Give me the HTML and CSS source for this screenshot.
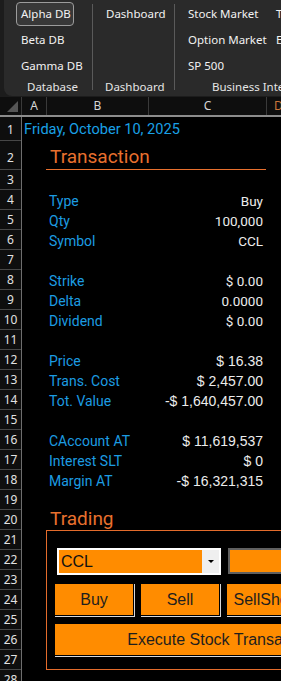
FILE: index.html
```html
<!DOCTYPE html>
<html lang="en">
  <head>
    <meta charset="UTF-8" />
    <meta name="viewport" content="width=device-width, initial-scale=1.0" />
    <title>Trading Sheet</title>
    <link rel="stylesheet" href="styles.css">
  </head>
  <body>
    <div class="ribbon-wrap">
      <div class="ribbon">
        <div class="group group-db">
          <div class="items">
            <div class="item active">Alpha DB</div>
            <div class="item">Beta DB</div>
            <div class="item">Gamma DB</div>
          </div>
          <div class="group-label">Database</div>
        </div>
        <div class="sep"></div>
        <div class="group group-dash">
          <div class="items">
            <div class="item">Dashboard</div>
          </div>
          <div class="group-label">Dashboard</div>
        </div>
        <div class="sep"></div>
        <div class="group group-bi">
          <div class="cols">
            <div class="items items-first">
              <div class="item">Stock Market</div>
              <div class="item">Option Market</div>
              <div class="item">SP 500</div>
            </div>
            <div class="items">
              <div class="item">Trade Log</div>
              <div class="item">Earnings</div>
            </div>
          </div>
          <div class="group-label">Business Intelligence</div>
        </div>
      </div>
    </div>

    <div class="col-heads">
      <div class="corner"><span class="corner-mark"></span></div>
      <div class="ch ch-a">A</div>
      <div class="ch ch-b">B</div>
      <div class="ch ch-c">C</div>
      <div class="ch ch-d">D</div>
    </div>

    <div class="grid">
      <div class="row-heads">
        <div class="rh rh-1">1</div>
        <div class="rh rh-2">2</div>
        <div class="rh">3</div>
        <div class="rh">4</div>
        <div class="rh">5</div>
        <div class="rh">6</div>
        <div class="rh">7</div>
        <div class="rh">8</div>
        <div class="rh">9</div>
        <div class="rh">10</div>
        <div class="rh">11</div>
        <div class="rh">12</div>
        <div class="rh">13</div>
        <div class="rh">14</div>
        <div class="rh">15</div>
        <div class="rh">16</div>
        <div class="rh">17</div>
        <div class="rh">18</div>
        <div class="rh">19</div>
        <div class="rh">20</div>
        <div class="rh">21</div>
        <div class="rh">22</div>
        <div class="rh">23</div>
        <div class="rh">24</div>
        <div class="rh">25</div>
        <div class="rh">26</div>
        <div class="rh">27</div>
        <div class="rh">28</div>
      </div>

      <div class="cells">
        <div class="row row-1"><span class="date">Friday, October 10, 2025</span></div>
        <div class="row row-2"><span class="title title-line">Transaction</span></div>
        <div class="row"></div>
        <div class="row"><span class="label">Type</span><span class="value">Buy</span></div>
        <div class="row"><span class="label">Qty</span><span class="value">100,000</span></div>
        <div class="row"><span class="label">Symbol</span><span class="value">CCL</span></div>
        <div class="row"></div>
        <div class="row"><span class="label">Strike</span><span class="value">$ 0.00</span></div>
        <div class="row"><span class="label">Delta</span><span class="value">0.0000</span></div>
        <div class="row"><span class="label">Dividend</span><span class="value">$ 0.00</span></div>
        <div class="row"></div>
        <div class="row"><span class="label">Price</span><span class="value money">$ 16.38</span></div>
        <div class="row"><span class="label">Trans. Cost</span><span class="value money">$ 2,457.00</span></div>
        <div class="row"><span class="label">Tot. Value</span><span class="value money">-$ 1,640,457.00</span></div>
        <div class="row"></div>
        <div class="row"><span class="label">CAccount AT</span><span class="value money">$ 11,619,537</span></div>
        <div class="row"><span class="label">Interest SLT</span><span class="value money">$ 0</span></div>
        <div class="row"><span class="label">Margin AT</span><span class="value money">-$ 16,321,315</span></div>
        <div class="row"></div>
        <div class="row row-20"><span class="title">Trading</span></div>

        <div class="trading">
          <div class="trade-top">
            <div class="combo">
              <span class="combo-text">CCL</span>
              <span class="combo-btn"><span class="arrow"></span></span>
            </div>
            <div class="qty-box"></div>
          </div>
          <div class="trade-buttons">
            <button class="btn">Buy</button>
            <button class="btn">Sell</button>
            <button class="btn">SellShort</button>
          </div>
          <button class="btn btn-wide">Execute Stock Transaction</button>
        </div>
      </div>
    </div>
  </body>
</html>
```

FILE: styles.css
```css
* {
  margin: 0;
  padding: 0;
  box-sizing: border-box;
}
body {
  width: 281px;
  height: 681px;
  overflow: hidden;
  background-color: #000;
  font-family: "Noto Sans", sans-serif;
}

/* ribbon */
.ribbon-wrap {
  height: 97px;
  background-color: #1c1c1c;
}
.ribbon {
  display: flex;
  width: 640px;
  height: 96px;
  margin-left: 4px;
  background-color: #2a2a2a;
  border-bottom-left-radius: 8px;
  color: #f2f2f2;
  font-size: 11.5px;
}
.group {
  display: flex;
  flex-direction: column;
  justify-content: space-between;
  flex-shrink: 0;
  padding: 2px 0 2px 8px;
}
.group-db {
  width: 88px;
  padding-left: 12px;
}
.group-dash {
  width: 81px;
}
.items {
  display: flex;
  flex-direction: column;
  gap: 2px;
}
.items-first {
  width: 88px;
}
.cols {
  display: flex;
}
.item {
  height: 24px;
  line-height: 22px;
  padding: 0 4px;
  border: 1px solid transparent;
  border-radius: 4px;
  white-space: nowrap;
}
.item.active {
  width: 58px;
  border-color: #9c9c9c;
  background-color: #383838;
}
.group-label {
  height: 14px;
  line-height: 14px;
  white-space: nowrap;
  color: #e6e6e6;
}
.group-db .group-label {
  padding-left: 11px;
}
.group-dash .group-label {
  padding-left: 4px;
}
.group-bi .group-label {
  padding-left: 29px;
}
.sep {
  width: 1px;
  flex-shrink: 0;
  margin: 4px 0 6px;
  background-color: #5a5a5a;
}

/* column headers */
.col-heads {
  display: flex;
  width: 400px;
  height: 20px;
  background-color: #0e0e0e;
  border-bottom: 2px solid #8c8c8c;
  color: #d6d6d6;
  font-size: 12px;
}
.corner {
  display: flex;
  align-items: flex-end;
  justify-content: flex-end;
  flex-shrink: 0;
  width: 22px;
  padding: 0 3px 3px 0;
  border-right: 1px solid #3a3a3a;
}
.corner-mark {
  width: 0;
  height: 0;
  border-left: 11px solid transparent;
  border-bottom: 11px solid #555;
}
.ch {
  flex-shrink: 0;
  line-height: 18px;
  text-align: center;
  border-right: 1px solid #3a3a3a;
}
.ch-a {
  width: 25px;
}
.ch-b {
  width: 102px;
}
.ch-c {
  width: 118px;
}
.ch-d {
  width: 24px;
  color: #c9773b;
}

/* sheet body */
.grid {
  display: flex;
}
.row-heads {
  width: 22px;
  flex-shrink: 0;
  background-color: #0e0e0e;
  border-right: 1px solid #6e6e6e;
  color: #e2e2e2;
  font-size: 12px;
}
.rh {
  height: 20px;
  line-height: 20px;
  text-align: center;
  border-bottom: 1px solid #474747;
}
.rh-1 {
  height: 24px;
  line-height: 26px;
}
.rh-2 {
  height: 29px;
  line-height: 34px;
}
.cells {
  width: 500px;
  flex-shrink: 0;
}
.row {
  display: flex;
  height: 20px;
  padding: 2px 0 0 24px;
  line-height: 18px;
  font-family: Roboto, sans-serif;
  white-space: nowrap;
}
.row-1 {
  height: 24px;
  padding: 0 0 0 2px;
  line-height: 24px;
}
.row-2 {
  height: 29px;
  padding-top: 5px;
  line-height: 22px;
}
.row-20 {
  padding-top: 0;
}
.date {
  font-size: 14.6px;
  color: #1aa0e6;
}
.title {
  padding-left: 4px;
  font-size: 19px;
  color: #e8702e;
}
.title-line {
  width: 220px;
  height: 24px;
  border-bottom: 1px solid #e8702e;
}
.label {
  width: 102px;
  padding-left: 3px;
  font-size: 14px;
  color: #1c9ce2;
}
.value {
  width: 118px;
  padding-right: 3px;
  text-align: right;
  font-size: 13.5px;
  color: #ececec;
}
.value.money {
  font-family: "Liberation Sans", Arial, sans-serif;
  font-size: 14px;
}

/* trading panel */
.trading {
  display: flex;
  flex-direction: column;
  width: 420px;
  height: 140px;
  margin-left: 24px;
  padding: 17px 0 0 7px;
  border: 1px solid #e46c2c;
  font-family: "Liberation Sans", Arial, sans-serif;
  font-size: 16px;
}
.trade-top {
  display: flex;
  gap: 7px;
  margin-left: 3px;
}
.combo {
  display: flex;
  flex-shrink: 0;
  width: 164px;
  height: 27px;
  border: 2px solid #fff;
  background-color: #ff8c00;
}
.combo-text {
  flex: 1;
  padding-left: 2px;
  line-height: 23px;
  color: #111;
}
.combo-btn {
  display: flex;
  align-items: center;
  justify-content: center;
  width: 17px;
  background-color: #efefef;
}
.arrow {
  width: 0;
  height: 0;
  border-left: 3px solid transparent;
  border-right: 3px solid transparent;
  border-top: 3px solid #000;
}
.qty-box {
  flex-shrink: 0;
  width: 164px;
  height: 26px;
  border: 2px solid #606060;
  background-color: #ff8c00;
}
.trade-buttons {
  display: flex;
  gap: 6px;
  margin-top: 8px;
}
.btn {
  flex-shrink: 0;
  width: 80px;
  height: 33px;
  border: 1px solid #000;
  background-color: #ff8c00;
  box-shadow: 1px 1px 0 #d8d8d8;
  color: #1e1e1e;
  font-family: "Liberation Sans", Arial, sans-serif;
  font-size: 16px;
  white-space: nowrap;
}
.btn-wide {
  width: 336px;
  margin-top: 7px;
}
```
